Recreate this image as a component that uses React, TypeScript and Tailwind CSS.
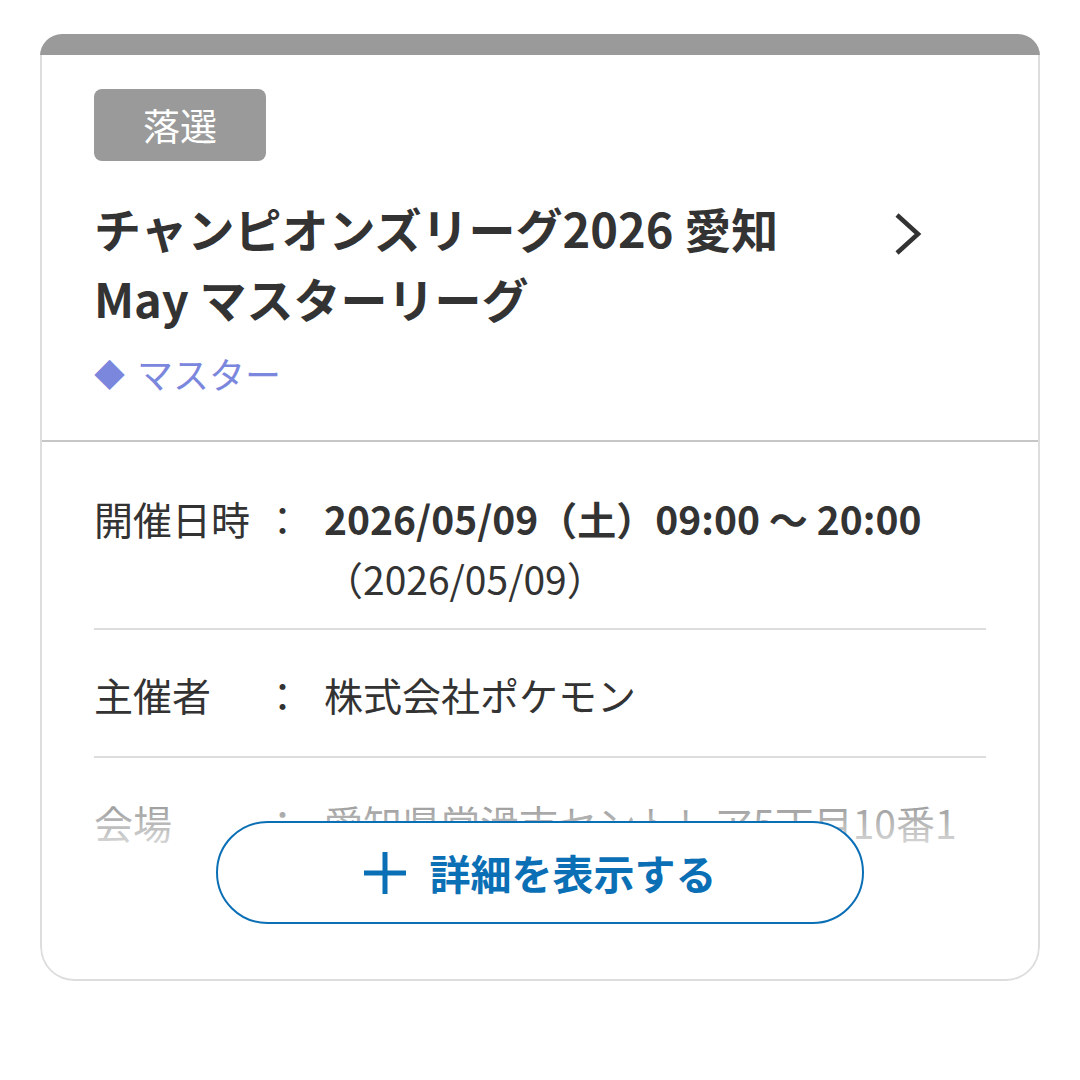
import React from "react";

const font = { fontFamily: '"Noto Sans CJK JP", "Noto Sans", sans-serif' };

export default function App() {
  return (
    <div className="min-h-[1080px] bg-white pt-[34px] px-[40px]" style={font}>
      <div className="w-[1000px] rounded-t-[22px] rounded-b-[34px] overflow-hidden bg-white">
        <div className="h-[21px] bg-[#9a9a9a]" />
        <div className="border-x-2 border-b-2 border-[#dddddd] rounded-b-[34px]">
          {/* header */}
          <div className="px-[52px] pt-[34px] pb-[42px]">
            <div className="w-[172px] h-[72px] rounded-[8px] bg-[#9a9a9a] flex items-center justify-center text-white text-[37px] leading-none">
              落選
            </div>
            <div className="mt-[32px] flex items-start">
              <h2 className="w-[740px] text-[47px] leading-[70px] font-bold text-[#333333]">
                チャンピオンズリーグ2026 愛知 May マスターリーグ
              </h2>
              <div className="ml-auto mr-[64px] mt-[19px]">
                <svg width="30" height="44" viewBox="0 0 30 44" fill="none">
                  <polyline
                    points="5,3 26,22 5,41"
                    stroke="#333333"
                    strokeWidth="4.5"
                    strokeLinejoin="miter"
                  />
                </svg>
              </div>
            </div>
            <div className="mt-[15px] flex items-center text-[36px] leading-[50px] text-[#7b87dd]">
              <span className="text-[31px] mr-[12px]">◆</span>
              <span>マスター</span>
            </div>
          </div>
          <div className="h-[2px] bg-[#c6c6c6]" />
          {/* details */}
          <div className="px-[52px] pb-[55px]">
            <div className="relative h-[430px] overflow-hidden pt-[12px]">
              <div className="flex pt-[34px] pb-[20px] border-b-2 border-[#dddddd] text-[39px] leading-[60px] text-[#333333]">
                <div className="w-[169px] shrink-0">開催日時</div>
                <div className="w-[39px] shrink-0">：</div>
                <div className="ml-[22px]">
                  <div className="font-bold whitespace-nowrap">2026/05/09（土）09:00 〜 20:00</div>
                  <div>（2026/05/09）</div>
                </div>
              </div>
              <div className="flex pt-[34px] pb-[32px] border-b-2 border-[#dddddd] text-[39px] leading-[60px] text-[#333333]">
                <div className="w-[169px] shrink-0">主催者</div>
                <div className="w-[39px] shrink-0">：</div>
                <div className="ml-[22px]">株式会社ポケモン</div>
              </div>
              <div className="flex pt-[34px] pb-[32px] text-[39px] leading-[60px] text-[#333333]">
                <div className="w-[169px] shrink-0">会場</div>
                <div className="w-[39px] shrink-0">：</div>
                <div className="ml-[22px] whitespace-nowrap">愛知県常滑市セントレア5丁目10番1</div>
              </div>
              <div className="absolute left-0 right-0 bottom-0 h-[84px] bg-gradient-to-b from-white/40 to-white" />
            </div>
            <div className="relative -mt-[51px] flex justify-center">
              <button className="w-[648px] h-[103px] rounded-full border-2 border-[#0b6fb5] bg-white flex items-center justify-center text-[#0b6fb5] text-[41px] font-bold">
                <svg width="42" height="42" viewBox="0 0 42 42" className="mr-[24px]">
                  <path d="M21 0V42M0 21H42" stroke="#0b6fb5" strokeWidth="5" />
                </svg>
                詳細を表示する
              </button>
            </div>
          </div>
        </div>
      </div>
    </div>
  );
}
